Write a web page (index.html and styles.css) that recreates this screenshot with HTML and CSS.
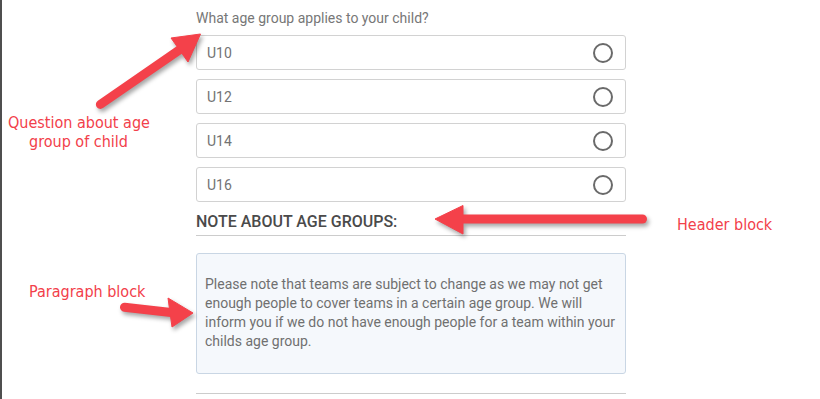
FILE: index.html
```html
<!DOCTYPE html>
<html lang="en">
<head>
<meta charset="utf-8">
<title>Age group form</title>
<link rel="stylesheet" href="styles.css">
</head>
<body>
<div class="page">
  <main class="form">
    <p class="question">What age group applies to your child?</p>
    <div class="options">
      <label class="option"><span class="option-text">U10</span><span class="radio"></span></label>
      <label class="option"><span class="option-text">U12</span><span class="radio"></span></label>
      <label class="option"><span class="option-text">U14</span><span class="radio"></span></label>
      <label class="option"><span class="option-text">U16</span><span class="radio"></span></label>
    </div>
    <h3 class="section-head">NOTE ABOUT AGE GROUPS:</h3>
    <div class="note">Please note that teams are subject to change as we may not get enough people to cover teams in a certain age group. We will inform you if we do not have enough people for a team within your childs age group.</div>
    <hr class="divider">
  </main>

  <div class="annotations">
    <svg class="arrows" width="820" height="399" viewBox="0 0 820 399" xmlns="http://www.w3.org/2000/svg">
      <g class="arrow">
        <line x1="100.4" y1="104.4" x2="180" y2="49.5" />
        <polygon points="200.5,34 171,38 188,62" />
      </g>
      <g class="arrow">
        <line x1="642.5" y1="219" x2="462" y2="219" />
        <polygon points="435,219 463,205.5 463,234" />
      </g>
      <g class="arrow">
        <line x1="124.5" y1="307.3" x2="171" y2="312.5" />
        <polygon points="193,313 168,298 172,327" />
      </g>
    </svg>
    <div class="label label-question">Question about age<br>group of child</div>
    <div class="label label-header">Header block</div>
    <div class="label label-paragraph">Paragraph block</div>
  </div>
</div>
</body>
</html>
```

FILE: styles.css
```css
* { box-sizing: border-box; }

html, body {
  margin: 0;
  padding: 0;
  background: #ffffff;
}

.page {
  position: relative;
  width: 820px;
  height: 399px;
  overflow: hidden;
  border-left: 2px solid #4f4f4f;
  font-family: Roboto, "Liberation Sans", sans-serif;
}

.form {
  width: 430px;
  margin-left: 194px;
  padding-top: 8px;
}

.question {
  margin: 0 0 7px 0;
  font-size: 14px;
  line-height: 20px;
  color: #777777;
}

.options {
  display: flex;
  flex-direction: column;
  gap: 9px;
}

.option {
  display: flex;
  align-items: center;
  justify-content: space-between;
  height: 35px;
  padding: 0 12px 0 10px;
  border: 1px solid #d2d2d2;
  border-radius: 3px;
  background: #ffffff;
}

.option-text {
  font-size: 14px;
  color: #737373;
}

.radio {
  width: 20px;
  height: 20px;
  border: 2px solid #6a6a6a;
  border-radius: 50%;
}

.section-head {
  margin: 10px 0 0 0;
  padding-bottom: 3px;
  font-size: 16px;
  line-height: 20px;
  font-weight: 500;
  color: #4a4a4a;
  border-bottom: 1px solid #cccccc;
}

.note {
  margin-top: 17px;
  padding: 21px 9px 22px 8px;
  background: #f5f8fc;
  border: 1px solid #c9d6e4;
  border-radius: 3px;
  font-size: 14px;
  line-height: 19px;
  color: #707070;
}

.divider {
  margin: 19px 0 0 0;
  border: 0;
  border-top: 1px solid #cccccc;
  height: 0;
}

.annotations {
  position: absolute;
  left: -2px;
  top: 0;
  width: 820px;
  height: 399px;
  pointer-events: none;
}

.arrows {
  position: absolute;
  left: 0;
  top: 0;
}

.arrow {
  filter: drop-shadow(2px 3px 2px rgba(0, 0, 0, 0.35));
}

.arrow line {
  stroke: #f4414a;
  stroke-width: 9;
  stroke-linecap: round;
}

.arrow polygon {
  fill: #f4414a;
  stroke: #f4414a;
  stroke-width: 1;
  stroke-linejoin: round;
}

.label {
  position: absolute;
  font-family: "DejaVu Sans Condensed", "DejaVu Sans", Tahoma, sans-serif;
  font-stretch: condensed;
  font-size: 16px;
  line-height: 19px;
  color: #f2404a;
  white-space: nowrap;
}

.label-question {
  left: 8px;
  top: 113px;
  width: 141px;
  text-align: center;
}

.label-header {
  left: 677px;
  top: 215px;
}

.label-paragraph {
  left: 29px;
  top: 282px;
}
```
